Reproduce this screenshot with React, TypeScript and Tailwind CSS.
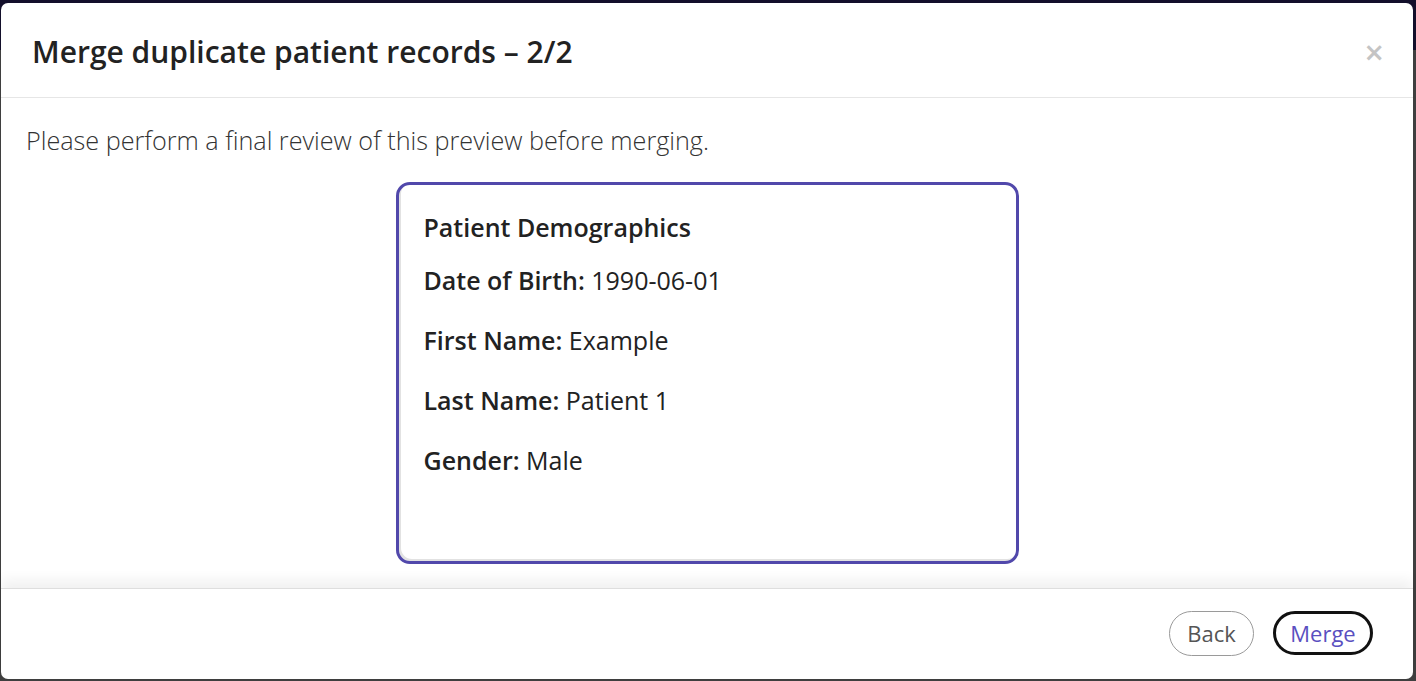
import React from "react";

const rows = [
  { label: "Date of Birth:", value: "1990-06-01" },
  { label: "First Name:", value: "Example" },
  { label: "Last Name:", value: "Patient 1" },
  { label: "Gender:", value: "Male" },
];

export default function App() {
  return (
    <div
      className="relative h-[681px] w-[1416px] overflow-hidden bg-[#3f3f3f]"
      style={{ fontFamily: '"Open Sans", "Noto Sans", sans-serif' }}
    >
      {/* underlying page header, dimmed by the overlay */}
      <div className="h-[50px] bg-[#130f2b]" />

      {/* dialog */}
      <div className="absolute left-[1px] top-[3px] flex h-[676px] w-[1412px] flex-col rounded-[7px] bg-white">
        <header className="flex h-[95px] shrink-0 items-center justify-between border-b border-[#e6e6e6] pl-[31px] pr-[29px] pt-[4px]">
          <h1 className="text-[30px] font-semibold leading-[40px] text-[#222]">
            Merge duplicate patient records – 2/2
          </h1>
          <button className="text-[34px] font-semibold leading-none text-[#c4c4c4]">×</button>
        </header>

        <div className="flex flex-1 flex-col px-[25px] pt-[27px]">
          <p className="text-[25.2px] font-light leading-[30px] text-[#333]">
            Please perform a final review of this preview before merging.
          </p>

          <div className="mx-auto mt-[27px] h-[382px] w-[623px] rounded-[14px] border-[3px] border-[#5148ab] pl-[25px] pr-[24px] pt-[25px] shadow-[inset_2px_-2px_0_#e2e2e2]">
            <h2 className="text-[25px] font-semibold leading-[34px] text-[#222]">
              Patient Demographics
            </h2>
            <div className="mt-[19px] flex flex-col gap-[26px]">
              {rows.map((r) => (
                <div key={r.label} className="text-[25px] leading-[34px] text-[#222]">
                  <span className="font-semibold">{r.label}</span> {r.value}
                </div>
              ))}
            </div>
          </div>
        </div>

        <footer className="flex h-[91px] shrink-0 items-center justify-end gap-[19px] border-t border-[#dedede] pb-[2px] pr-[40px] shadow-[0_-8px_12px_rgba(0,0,0,0.06)]">
          <button className="h-[45px] w-[85px] rounded-full border border-[#9a9a9a] text-[22px] text-[#555]">
            Back
          </button>
          <button className="h-[44px] w-[100px] rounded-full border-[3px] border-[#111] text-[22px] text-[#5a4fc0]">
            Merge
          </button>
        </footer>
      </div>
    </div>
  );
}
